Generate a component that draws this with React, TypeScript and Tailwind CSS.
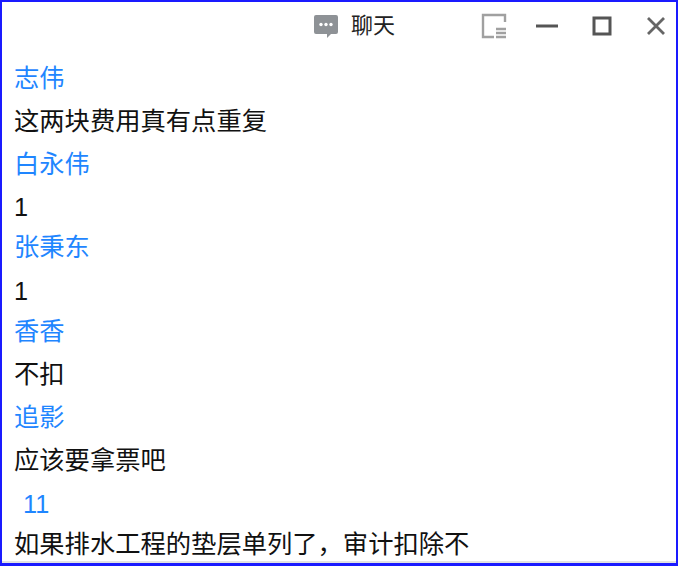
const messages: { text: string; name?: boolean; rowClass?: string; indent?: boolean }[] = [
  { text: '志伟', name: true },
  { text: '这两块费用真有点重复' },
  { text: '白永伟', name: true },
  { text: '1', rowClass: 'h-[40px] pt-[4px]' },
  { text: '张秉东', name: true },
  { text: '1', rowClass: 'h-[41px] pt-[5px]' },
  { text: '香香', name: true },
  { text: '不扣' },
  { text: '追影', name: true },
  { text: '应该要拿票吧' },
  { text: '11', name: true, rowClass: 'h-[41px] pt-[4px]', indent: true },
  { text: '如果排水工程的垫层单列了，审计扣除不' },
];

export default function App() {
  return (
    <div className="w-[680px] h-[567px] bg-white overflow-hidden font-['Liberation_Sans','Noto_Sans_CJK_SC',sans-serif]">
      <div className="w-[678px] h-[566px] border-x-2 border-t-2 border-b-[3px] border-[#1a1aff] flex flex-col overflow-hidden">
        {/* 标题栏 */}
        <div className="h-[54px] shrink-0 flex items-center pb-[6px] pl-[310px]">
          <svg width="28" height="26" viewBox="0 0 28 26" className="mr-[11px]">
            <path
              d="M4 2h20a2 2 0 0 1 2 2v15a2 2 0 0 1-2 2h-5l-4 4v-4H4a2 2 0 0 1-2-2V4a2 2 0 0 1 2-2z"
              fill="#8e9296"
            />
            <circle cx="9" cy="11.500" r="1.700" fill="#fff" />
            <circle cx="14" cy="11.500" r="1.700" fill="#fff" />
            <circle cx="19" cy="11.500" r="1.700" fill="#fff" />
          </svg>
          <span className="text-[22px] leading-none text-[#222]">聊天</span>
          <div className="ml-[86px] flex items-center">
            <svg width="26" height="26" viewBox="0 0 26 26" fill="none" stroke="#a0a0a0" strokeWidth="2.400">
              <path d="M24 9V2H2v22h11" />
              <path d="M15 16h10M15 20h10M15 24h10" />
            </svg>
            <svg width="24" height="24" viewBox="0 0 24 24" fill="none" stroke="#555" strokeWidth="3" className="ml-[28px]">
              <path d="M1 12h22" />
            </svg>
            <svg width="20" height="20" viewBox="0 0 20 20" fill="none" stroke="#555" strokeWidth="3" className="ml-[33px]">
              <rect x="2" y="2" width="16" height="16" />
            </svg>
            <svg width="20" height="20" viewBox="0 0 20 20" fill="none" stroke="#666" strokeWidth="2.800" className="ml-[34px]">
              <path d="M2 2l16 16M18 2L2 18" />
            </svg>
          </div>
        </div>
        {/* 消息列表 */}
        <div className="flex-1 flex flex-col pt-[1px] pl-3 overflow-hidden">
          {messages.map((m, i) => (
            <div
              key={i}
              className={`shrink-0 flex items-center text-[25.300px] leading-none ${m.rowClass ?? 'h-[43px]'} ${
                m.name ? 'text-[#1f86ff]' : 'text-[#111]'
              } ${m.indent ? 'pl-[9px]' : ''}`}
            >
              {m.text}
            </div>
          ))}
        </div>
        <div className="h-[2px] shrink-0 bg-[#e2e2e2]" />
      </div>
    </div>
  );
}
